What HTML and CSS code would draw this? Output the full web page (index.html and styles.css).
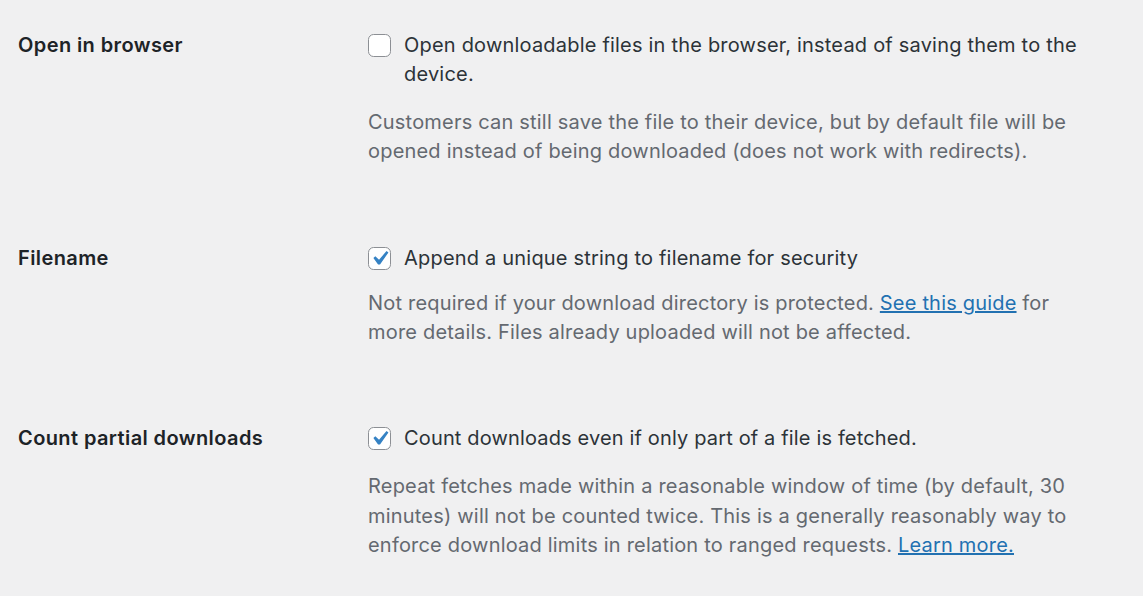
FILE: index.html
```html
<!DOCTYPE html>
<html lang="en">
<head>
<meta charset="utf-8">
<title>Downloads settings</title>
<link rel="stylesheet" href="styles.css">
</head>
<body>
<div class="form-table">
  <div class="row row-browser">
    <div class="label">Open in browser</div>
    <div class="field">
      <label class="check"><span class="box"></span><span class="check-text">Open downloadable files in the browser, instead of saving them to the device.</span></label>
      <p class="description">Customers can still save the file to their device, but by default file will be opened instead of being downloaded (does not work with redirects).</p>
    </div>
  </div>
  <div class="row row-filename">
    <div class="label">Filename</div>
    <div class="field">
      <label class="check"><span class="box checked"><svg viewBox="0 0 20 20" class="tick"><path d="M14.83 4.89l1.34.94-5.81 8.38H9.02L5.78 9.67l1.34-1.25 2.57 2.4z"/></svg></span><span class="check-text">Append a unique string to filename for security</span></label>
      <p class="description">Not required if your download directory is protected. <a href="#">See this guide</a> for more details. Files already uploaded will not be affected.</p>
    </div>
  </div>
  <div class="row row-partial">
    <div class="label">Count partial downloads</div>
    <div class="field">
      <label class="check"><span class="box checked"><svg viewBox="0 0 20 20" class="tick"><path d="M14.83 4.89l1.34.94-5.81 8.38H9.02L5.78 9.67l1.34-1.25 2.57 2.4z"/></svg></span><span class="check-text">Count downloads even if only part of a file is fetched.</span></label>
      <p class="description">Repeat fetches made within a reasonable window of time (by default, 30 minutes) will not be counted twice. This is a generally reasonably way to enforce download limits in relation to ranged requests. <a href="#">Learn more.</a></p>
    </div>
  </div>
</div>
</body>
</html>
```
FILE: styles.css
```css
html, body {
  margin: 0;
  padding: 0;
  background: #f0f0f1;
}
body {
  font-family: Inter, "Noto Sans", "Liberation Sans", sans-serif;
  font-size: 20px;
  line-height: 29.4px;
  color: #3c434a;
}
.form-table {
  display: flex;
  flex-direction: column;
  gap: 77px;
  padding: 31px 0 0 18px;
}
.row {
  display: grid;
  grid-template-columns: 350px 730px;
}
.label {
  font-weight: 600;
  color: #1d2327;
  letter-spacing: 0.4px;
}
.check {
  display: flex;
  align-items: flex-start;
  gap: 13px;
  color: #2c3338;
}
.box {
  flex: none;
  box-sizing: border-box;
  width: 23px;
  height: 23px;
  margin-top: 3px;
  border: 1.4px solid #8c8f94;
  border-radius: 5.6px;
  background: #fff;
  position: relative;
}
.tick {
  position: absolute;
  left: -4px;
  top: -4px;
  width: 29px;
  height: 29px;
  fill: #3582c4;
}
.description {
  margin: 18px 0 0;
  color: #646970;
}
.description a {
  color: #2271b1;
  text-decoration: underline;
}
.row-browser .check-text {
  letter-spacing: 0.2px;
}
.row-browser .description {
  letter-spacing: 0.2px;
}
.row-filename .check-text {
  letter-spacing: 0.2px;
}
.row-filename .description {
  margin-top: 16px;
  letter-spacing: 0.19px;
}
.row-partial {
  margin-top: -1px;
}
.row-partial .check-text {
  letter-spacing: 0.15px;
}
.row-partial .description {
  margin-top: 19px;
  letter-spacing: 0.2px;
}
```
